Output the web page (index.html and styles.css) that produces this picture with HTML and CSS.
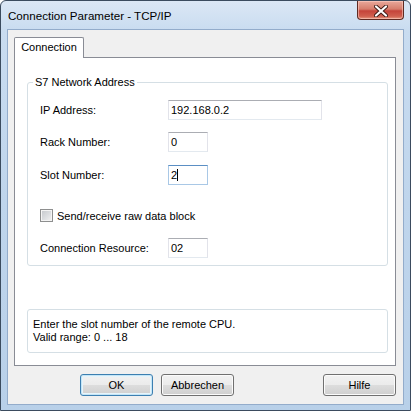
FILE: index.html
```html
<!DOCTYPE html>
<html>
<head>
<meta charset="utf-8">
<link rel="stylesheet" href="styles.css">
</head>
<body>
<div class="window">
  <div class="titlebar">
    <span class="title">Connection Parameter - TCP/IP</span>
    <div class="close">
      <svg width="14" height="12" viewBox="0 0 14 12">
        <path d="M2 1.5 L12 10.5 M12 1.5 L2 10.5" stroke="#3b1a14" stroke-width="4" stroke-linecap="round"/>
        <path d="M2 1.5 L12 10.5 M12 1.5 L2 10.5" stroke="#ffffff" stroke-width="2.2" stroke-linecap="round"/>
      </svg>
    </div>
  </div>
  <div class="client">
    <div class="tabs"><div class="tab">Connection</div></div>
    <div class="panel">
      <div class="group main">
        <span class="legend">S7 Network Address</span>
        <div class="row r1"><span class="label">IP Address:</span><div class="input wide">192.168.0.2</div></div>
        <div class="row r2"><span class="label">Rack Number:</span><div class="input small">0</div></div>
        <div class="row r3"><span class="label">Slot Number:</span><div class="input small focus"><span class="caret">2</span></div></div>
        <div class="checkrow"><span class="checkbox"></span><span class="checklabel">Send/receive raw data block</span></div>
        <div class="row r5"><span class="label">Connection Resource:</span><div class="input small">02</div></div>
      </div>
      <div class="group info">
        <div class="line">Enter the slot number of the remote CPU.</div>
        <div class="line">Valid range: 0 ... 18</div>
      </div>
    </div>
    <div class="buttons">
      <div class="btn default">OK</div>
      <div class="btn">Abbrechen</div>
      <div class="btn help">Hilfe</div>
    </div>
  </div>
</div>
</body>
</html>
```

FILE: styles.css
```css
html, body {
  margin: 0;
  padding: 0;
  background: #ffffff;
}
body {
  font-family: "Liberation Sans", Arial, sans-serif;
  font-size: 11px;
  color: #000;
}
.window {
  box-sizing: border-box;
  width: 411px;
  height: 411px;
  border: 1px solid #3b4b5e;
  border-radius: 6px 6px 0 0;
  background: linear-gradient(to bottom, #dbe7f5 0px, #c9dcf0 30px, #bfd5ec 200px, #b8d0e9 411px);
  padding: 0 6px 5px 6px;
  display: flex;
  flex-direction: column;
}
.titlebar {
  height: 28px;
  display: flex;
  justify-content: space-between;
  align-items: flex-start;
  margin: 0 -6px 0 -6px;
  padding: 0 6px 0 7px;
}
.title {
  font-family: "Liberation Sans", Arial, sans-serif;
  font-size: 11.6px;
  line-height: 14px;
  margin-top: 8px;
  color: #000;
}
.close {
  box-sizing: border-box;
  width: 47px;
  height: 19px;
  border: 1px solid #5e2a22;
  border-top: none;
  border-radius: 0 0 4px 4px;
  background: linear-gradient(to bottom, #e9a99b 0%, #d67d6c 45%, #c5443a 55%, #d0604f 85%, #e79a82 100%);
  box-shadow: inset 0 0 0 1px rgba(255, 210, 200, 0.55);
  display: flex;
  align-items: center;
  justify-content: center;
}
.close svg { display: block; margin-top: 1px; }
.client {
  box-sizing: border-box;
  width: 397px;
  height: 376px;
  border: 1px solid #93accb;
  background: #f0f0f0;
  padding: 7px 7px 0 6px;
  display: flex;
  flex-direction: column;
}
.tabs {
  display: flex;
  height: 20px;
}
.tab {
  box-sizing: border-box;
  width: 70px;
  height: 21px;
  border: 1px solid #898c95;
  border-bottom: none;
  border-radius: 2px 2px 0 0;
  background: #ffffff;
  text-align: center;
  line-height: 19px;
  position: relative;
  z-index: 1;
}
.panel {
  box-sizing: border-box;
  width: 382px;
  height: 309px;
  border: 1px solid #898c95;
  background: #ffffff;
  padding: 24px 0 0 12px;
  display: flex;
  flex-direction: column;
}
.group {
  box-sizing: border-box;
  width: 361px;
  border: 1px solid #d5dfe5;
  border-radius: 3px;
  position: relative;
}
.main {
  height: 184px;
  padding: 0 0 0 12px;
}
.legend {
  position: absolute;
  left: 5px;
  top: -8px;
  background: #ffffff;
  padding: 0 2px;
  line-height: 14px;
}
.row {
  display: flex;
  align-items: center;
  height: 20px;
}
.r1 { margin-top: 17px; }
.r2 { margin-top: 12px; }
.r3 { margin-top: 13px; }
.r5 { margin-top: 16px; }
.label {
  width: 128px;
  flex: none;
}
.input {
  box-sizing: border-box;
  height: 20px;
  border: 1px solid #e2e3ea;
  border-top-color: #abadb3;
  border-bottom-color: #e3e9ef;
  background: #ffffff;
  padding-left: 2px;
  line-height: 18px;
}
.wide { width: 154px; }
.small { width: 40px; }
.focus {
  border-color: #a9c8e6;
  border-top-color: #5b8fc4;
}
.caret {
  border-right: 1px solid #000;
}
.checkrow {
  display: flex;
  align-items: center;
  height: 13px;
  margin-top: 24px;
}
.checkbox {
  box-sizing: border-box;
  width: 13px;
  height: 13px;
  border: 1px solid #8e8f8f;
  background: linear-gradient(135deg, #c4c7cb 0%, #dcdee1 55%, #f3f3f3 100%);
  box-shadow: inset 0 0 0 1px #f4f4f4;
  flex: none;
}
.checklabel {
  margin-left: 4px;
}
.info {
  height: 44px;
  margin-top: 43px;
  padding: 8px 0 0 5px;
}
.line {
  line-height: 13px;
}
.buttons {
  display: flex;
  margin-top: 8px;
  padding-left: 66px;
}
.btn {
  box-sizing: border-box;
  width: 73px;
  height: 22px;
  border: 1px solid #707070;
  border-radius: 3px;
  background: linear-gradient(to bottom, #f2f2f2 0%, #ebebeb 50%, #dddddd 50%, #cfcfcf 100%);
  box-shadow: inset 0 0 0 1px #fbfbfb;
  text-align: center;
  line-height: 20px;
  margin-right: 8px;
}
.btn.default {
  border-color: #3c7fb1;
  box-shadow: inset 0 0 0 1px #c4e5f6, inset 0 0 0 2px #e6f4fb;
}
.btn.help {
  margin-left: auto;
  margin-right: 0;
}
```
